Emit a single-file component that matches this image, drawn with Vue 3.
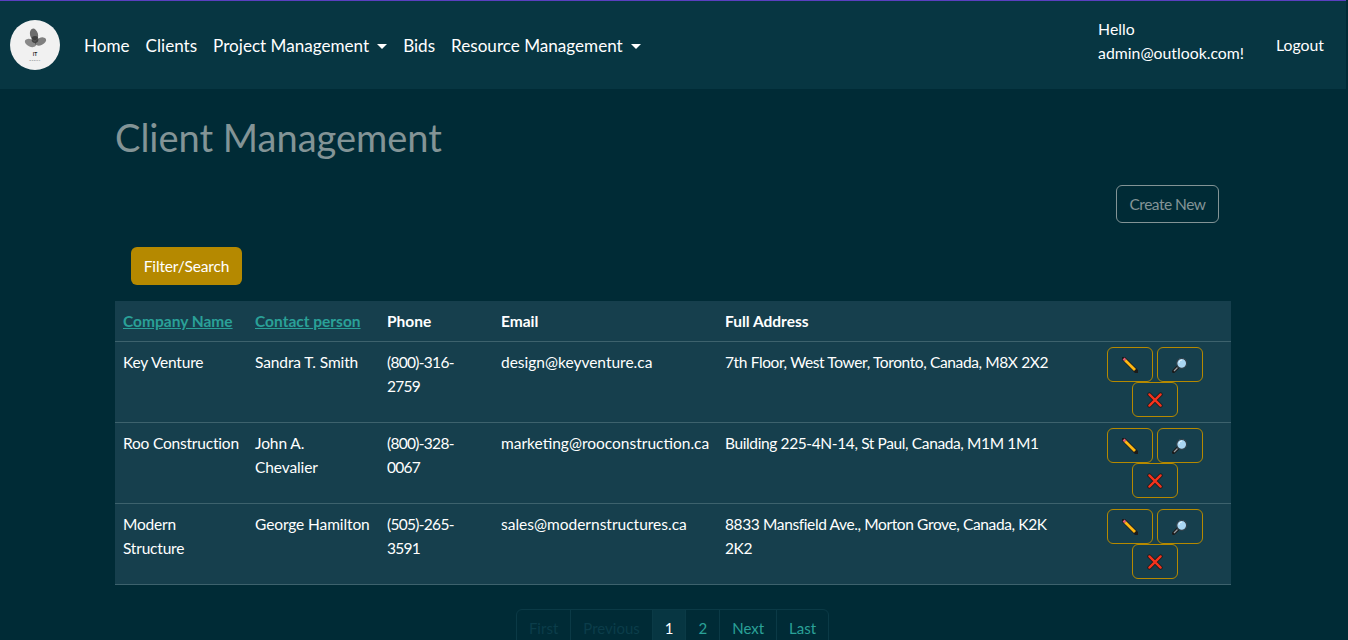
<script setup>
const clients = [
  { company: 'Key Venture', contact: 'Sandra T. Smith', phone: '(800)-316-2759', email: 'design@keyventure.ca', address: '7th Floor, West Tower, Toronto, Canada, M8X 2X2' },
  { company: 'Roo Construction', contact: 'John A.\nChevalier', phone: '(800)-328-0067', email: 'marketing@rooconstruction.ca', address: 'Building 225-4N-14, St Paul, Canada, M1M 1M1' },
  { company: 'Modern\nStructure', contact: 'George Hamilton', phone: '(505)-265-3591', email: 'sales@modernstructures.ca', address: '8833 Mansfield Ave., Morton Grove, Canada, K2K 2K2' },
]
const pages = [
  { label: 'First', state: 'off' },
  { label: 'Previous', state: 'off' },
  { label: '1', state: 'on' },
  { label: '2', state: '' },
  { label: 'Next', state: '' },
  { label: 'Last', state: '' },
]
</script>

<template>
  <div class="page">
    <nav class="navbar">
      <svg class="logo" viewBox="0 0 50 50" role="img" aria-label="IT logo">
        <circle cx="25" cy="25" r="25" fill="#f1f1f1" />
        <g fill="#333">
          <ellipse cx="24" cy="14.5" rx="4" ry="6" opacity=".7" transform="rotate(-15 24 14.5)" />
          <ellipse cx="30.5" cy="21.5" rx="3.6" ry="6" opacity=".6" transform="rotate(65 30.5 21.5)" />
          <ellipse cx="20.5" cy="23" rx="3.6" ry="6" opacity=".55" transform="rotate(-65 20.5 23)" />
          <circle cx="25" cy="19.5" r="3.4" opacity=".8" />
        </g>
        <text x="25" y="36" class="logo-it" text-anchor="middle">IT</text>
        <text x="25" y="40.5" class="logo-sub" text-anchor="middle">GROUP</text>
      </svg>
      <ul class="nav-links">
        <li>Home</li>
        <li>Clients</li>
        <li class="caret">Project Management</li>
        <li>Bids</li>
        <li class="caret">Resource Management</li>
      </ul>
      <div class="hello">Hello<br />admin@outlook.com!</div>
      <a class="logout">Logout</a>
    </nav>

    <main class="container">
      <h1>Client Management</h1>
      <div class="create-row"><button class="btn-create">Create New</button></div>
      <div class="filter-row"><button class="btn-filter">Filter/Search</button></div>

      <table>
        <colgroup>
          <col style="width: 132px" /><col style="width: 132px" /><col style="width: 114px" />
          <col style="width: 224px" /><col style="width: 362px" /><col />
        </colgroup>
        <thead>
          <tr>
            <th><a>Company Name</a></th>
            <th><a>Contact person</a></th>
            <th>Phone</th>
            <th>Email</th>
            <th>Full Address</th>
            <th></th>
          </tr>
        </thead>
        <tbody>
          <tr v-for="c in clients" :key="c.email">
            <td class="name company">{{ c.company }}</td>
            <td class="name contact">{{ c.contact }}</td>
            <td class="phone">{{ c.phone }}</td>
            <td>{{ c.email }}</td>
            <td class="address">{{ c.address }}</td>
            <td class="actions">
              <button class="btn-icon" aria-label="Edit">
                <svg viewBox="0 0 16 16" width="16" height="16">
                  <path d="M1.6 1.6 14.6 14.6" stroke="#1b1b1b" stroke-width="4.2" stroke-linecap="round" />
                  <path d="M3.2 3.2 13 13" stroke="#fdb813" stroke-width="2.8" />
                  <path d="M1.6 1.6 3.2 3.2" stroke="#e8607a" stroke-width="2.8" />
                </svg>
              </button>
              <button class="btn-icon" aria-label="View">
                <svg viewBox="0 0 16 16" width="16" height="16">
                  <path d="M5.5 10.5 1.6 14.4" stroke="#1b1b1b" stroke-width="3.4" stroke-linecap="round" />
                  <path d="M5.5 10.5 2 14" stroke="#9aa0a6" stroke-width="1.3" />
                  <circle cx="9.7" cy="6.3" r="5" fill="#a9d6f2" stroke="#30414b" stroke-width="1.3" />
                  <path d="M7 6a3 3 0 0 1 3-3" fill="none" stroke="#e2f3fd" stroke-width="1" />
                </svg>
              </button>
              <button class="btn-icon" aria-label="Delete">
                <svg viewBox="0 0 16 16" width="16" height="16">
                  <path d="M2.4 2.4 13.6 13.6M13.6 2.4 2.4 13.6" stroke="#1b1b1b" stroke-width="4" stroke-linecap="round" />
                  <path d="M2.4 2.4 13.6 13.6M13.6 2.4 2.4 13.6" stroke="#f5331d" stroke-width="2.4" stroke-linecap="round" />
                </svg>
              </button>
            </td>
          </tr>
        </tbody>
      </table>

      <ul class="pager">
        <li v-for="p in pages" :key="p.label" :class="p.state">{{ p.label }}</li>
      </ul>
    </main>
  </div>
</template>

<style>
html, body { margin: 0; height: 640px; overflow: hidden; background: #002b36; }
</style>

<style scoped>
.page {
  font-family: "Lato", "Liberation Sans", sans-serif;
  font-size: 15.5px;
  line-height: 24px;
  color: #fff;
  width: 1346px;
  height: 640px;
  overflow: hidden;
  background: #002b36;
  border-top: 1px solid #5a3fc0;
  box-sizing: border-box;
}
.navbar { display: flex; align-items: center; height: 88px; padding: 0 22px 0 10px; background: #073642; }
.logo { width: 50px; height: 50px; flex: none; }
.logo-it { font-size: 5px; font-weight: 700; fill: #222; }
.logo-sub { font-size: 2.4px; letter-spacing: 0.6px; fill: #666; }
.nav-links { display: flex; list-style: none; margin: 0 0 0 24px; padding: 2px 0 0; gap: 16px; flex: 1; font-size: 17.1px; }
.caret::after {
  content: "";
  display: inline-block;
  margin-left: 8px;
  vertical-align: 3px;
  border-top: 5px solid #fff;
  border-left: 5px solid transparent;
  border-right: 5px solid transparent;
}
.hello { margin-right: 32px; padding-bottom: 8px; font-size: 15.8px; }
.logout { font-size: 15.8px; }
.container { width: 1116px; margin: 0 auto; }
h1 { margin: 0; padding-top: 24px; font-size: 38px; line-height: 48px; font-weight: 400; color: #839496; }
.create-row { display: flex; justify-content: flex-end; padding: 24px 12px 0 0; }
button { font: inherit; cursor: pointer; }
.btn-create { height: 38px; width: 103px; padding: 0; background: none; color: #839496; border: 1px solid #839496; border-radius: 6px; letter-spacing: -0.5px; }
.filter-row { padding: 24px 0 16px 16px; }
.btn-filter { height: 38px; width: 111px; padding: 0; background: #b58900; color: #fff; border: 0; border-radius: 6px; letter-spacing: -0.15px; }
table { width: 100%; table-layout: fixed; border-collapse: collapse; background: #163f4d; }
th, td { padding: 8px; text-align: left; vertical-align: top; border-bottom: 1px solid #3d626d; }
th { font-weight: 700; }
th a { color: #2aa198; text-decoration: underline; }
td.name { padding-right: 0; white-space: pre-line; }
td.company { letter-spacing: -0.2px; }
td.contact { letter-spacing: -0.1px; }
td.phone { letter-spacing: -0.7px; }
td.address { letter-spacing: -0.38px; }
.actions { padding: 5px 8px; text-align: center; font-size: 0; line-height: 0; }
.btn-icon {
  display: inline-flex;
  align-items: center;
  justify-content: center;
  width: 46px;
  height: 35px;
  margin: 0 2px;
  padding: 0;
  background: none;
  border: 1px solid #b58900;
  border-radius: 6px;
}
.pager { display: flex; justify-content: center; list-style: none; margin: 24px 0 0; padding: 0; font-size: 15px; }
.pager li { padding: 6px 12px; color: #2aa198; border: 1px solid #0b3a46; margin-left: -1px; }
.pager li:first-child { border-radius: 6px 0 0 6px; }
.pager li:last-child { border-radius: 0 6px 6px 0; }
.pager .off { color: #0b3d4a; }
.pager .on { color: #fff; background: #073642; }
</style>
